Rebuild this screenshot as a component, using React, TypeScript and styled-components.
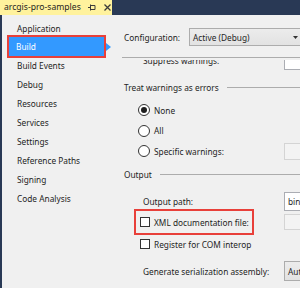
import React from 'react';
import styled, { createGlobalStyle } from 'styled-components';

const Global = createGlobalStyle`
  html, body { margin: 0; padding: 0; }
  body { width: 300px; height: 288px; overflow: hidden; background: #f0f0f0; }
  * { box-sizing: border-box; }
`;

const Window = styled.div`
  width: 300px;
  height: 288px;
  display: flex;
  flex-direction: column;
  background: #f0f0f0;
  font-family: "Noto Sans", sans-serif;
  font-size: 8.3px;
  color: #1e1e1e;
  overflow: hidden;
`;

const TabBar = styled.div`
  display: flex;
  height: 15px;
  flex: none;
  background: #293955;
`;

const Tab = styled.div`
  width: 112px;
  background: #fff29d;
  display: flex;
  align-items: center;
  padding: 0 0 1px 4px;
  font-size: 8.6px;
  color: #1e1e1e;
`;

const TabTitle = styled.span`
  width: 84px;
  white-space: nowrap;
`;

const TabIcon = styled.svg<{ $gap?: number }>`
  display: block;
  flex: none;
  margin-right: ${(p) => p.$gap ?? 0}px;
`;

const Body = styled.div`
  flex: 1;
  display: flex;
  min-height: 0;
`;

const Nav = styled.nav`
  width: 112px;
  flex: none;
  border-left: 2px solid #293955;
  padding-top: 3.6px;
  display: flex;
  flex-direction: column;
`;

const NavItem = styled.div<{ $selected?: boolean }>`
  position: relative;
  height: 18.9px;
  display: flex;
  align-items: center;
  white-space: nowrap;
  padding-left: ${(p) => (p.$selected ? 7 : 15)}px;
  margin-left: ${(p) => (p.$selected ? 7 : 0)}px;
  width: ${(p) => (p.$selected ? '95px' : 'auto')};
  background: ${(p) => (p.$selected ? '#3399ff' : 'transparent')};
  color: ${(p) => (p.$selected ? '#ffffff' : '#1e1e1e')};
  outline: ${(p) => (p.$selected ? '2px solid #e8403a' : 'none')};
  &::after {
    content: '';
    display: ${(p) => (p.$selected ? 'block' : 'none')};
    position: absolute;
    right: -7px;
    top: 50%;
    margin-top: -4px;
    border-left: 5px solid #3399ff;
    border-top: 4px solid transparent;
    border-bottom: 4px solid transparent;
  }
`;

const Content = styled.div`
  flex: 1;
  display: flex;
  flex-direction: column;
  min-width: 0;
`;

const ConfigRow = styled.div`
  display: flex;
  align-items: center;
  margin-top: 13px;
  padding-left: 12px;
  height: 18px;
  flex: none;
`;

const ConfigLabel = styled.span`
  width: 65px;
  flex: none;
`;

const Dropdown = styled.div<{ $width?: number }>`
  width: ${(p) => p.$width ?? 120}px;
  flex: none;
  height: 100%;
  display: flex;
  align-items: center;
  justify-content: space-between;
  padding: 0 2px 0 3px;
  background: linear-gradient(#ececec, #e2e2e2);
  border: 1px solid #acacac;
  white-space: nowrap;
  overflow: hidden;
`;

const Separator = styled.div`
  height: 1px;
  flex: none;
  background: #acacac;
  margin: 11px 0 0 10px;
`;

const Viewport = styled.div`
  flex: 1;
  overflow: hidden;
  margin-top: 2px;
  display: flex;
  flex-direction: column;
`;

const Row = styled.div<{ $h?: number; $mt?: number }>`
  display: grid;
  grid-template-columns: 172px 1fr;
  align-items: center;
  flex: none;
  height: ${(p) => p.$h ?? 20}px;
  margin-top: ${(p) => p.$mt ?? 0}px;
`;

const RowLabel = styled.div<{ $pl?: number }>`
  display: flex;
  align-items: center;
  gap: 4px;
  padding-left: ${(p) => p.$pl ?? 31}px;
  white-space: nowrap;
`;

const TextBox = styled.div<{ $h?: number; $disabled?: boolean }>`
  width: 40px;
  height: ${(p) => p.$h ?? 18}px;
  display: flex;
  align-items: center;
  padding-left: 3px;
  background: ${(p) => (p.$disabled ? '#f3f3f3' : '#ffffff')};
  border: 1px solid ${(p) => (p.$disabled ? '#d4d4d4' : '#abadb3')};
  white-space: nowrap;
  overflow: hidden;
`;

const GroupHeader = styled.div<{ $mt?: number }>`
  display: flex;
  align-items: center;
  gap: 8px;
  height: 18px;
  flex: none;
  margin-top: ${(p) => p.$mt ?? 0}px;
  padding-left: 12px;
  white-space: nowrap;
  &::after {
    content: '';
    flex: 1;
    height: 1px;
    background: #acacac;
  }
`;

const Radio = styled.span<{ $checked?: boolean }>`
  width: 12px;
  height: 12px;
  flex: none;
  border-radius: 50%;
  border: 1px solid #333333;
  background: #ffffff;
  display: flex;
  align-items: center;
  justify-content: center;
  &::after {
    content: '';
    display: ${(p) => (p.$checked ? 'block' : 'none')};
    width: 6px;
    height: 6px;
    border-radius: 50%;
    background: #1e1e1e;
  }
`;

const Checkbox = styled.span`
  width: 10px;
  height: 10px;
  flex: none;
  border: 1px solid #333333;
  background: #ffffff;
`;

const Highlight = styled.div`
  display: inline-flex;
  align-items: center;
  gap: 4px;
  height: 22px;
  padding: 0 3px 0 4px;
  outline: 2px solid #e8403a;
  justify-self: start;
`;

const ArrowGlyph = styled.svg`
  display: block;
  flex: none;
`;

const navItems = [
  'Application',
  'Build',
  'Build Events',
  'Debug',
  'Resources',
  'Services',
  'Settings',
  'Reference Paths',
  'Signing',
  'Code Analysis',
];

const Arrow = () => (
  <ArrowGlyph width="5" height="3" viewBox="0 0 5 3">
    <path d="M0 0h5L2.5 3z" fill="#333333" />
  </ArrowGlyph>
);

export default function App() {
  return (
    <>
      <Global />
      <Window>
        <TabBar>
          <Tab>
            <TabTitle>arcgis-pro-samples</TabTitle>
            <TabIcon $gap={8} width="8" height="7" viewBox="0 0 8 7">
              <path d="M0 3.5h2.5M2.5 0.5v6M2.5 1.5h4.5v4h-4.5" fill="none" stroke="#3a3a3a" strokeWidth="1" />
            </TabIcon>
            <TabIcon width="7" height="7" viewBox="0 0 7 7">
              <path d="M0.5 0.5l6 6M6.5 0.5l-6 6" fill="none" stroke="#3a3a3a" strokeWidth="1.3" />
            </TabIcon>
          </Tab>
        </TabBar>
        <Body>
          <Nav>
            {navItems.map((n) => (
              <NavItem key={n} $selected={n === 'Build'}>
                {n}
              </NavItem>
            ))}
          </Nav>
          <Content>
            <ConfigRow>
              <ConfigLabel>Configuration:</ConfigLabel>
              <Dropdown $width={112}>
                <span>Active (Debug)</span>
                <Arrow />
              </Dropdown>
            </ConfigRow>
            <Separator />
            <Viewport>
              <Row $h={19} $mt={-9}>
                <RowLabel>Suppress warnings:</RowLabel>
                <TextBox $h={19} />
              </Row>
              <GroupHeader $mt={8}>Treat warnings as errors</GroupHeader>
              <Row $h={20.5} $mt={4}>
                <RowLabel $pl={26}>
                  <Radio $checked />
                  None
                </RowLabel>
              </Row>
              <Row $h={20.5}>
                <RowLabel $pl={26}>
                  <Radio />
                  All
                </RowLabel>
              </Row>
              <Row $h={20.5}>
                <RowLabel $pl={26}>
                  <Radio />
                  Specific warnings:
                </RowLabel>
                <TextBox $h={17} $disabled />
              </Row>
              <GroupHeader $mt={3.5}>Output</GroupHeader>
              <Row $h={20} $mt={8}>
                <RowLabel>Output path:</RowLabel>
                <TextBox $h={19}>bin\</TextBox>
              </Row>
              <Row $h={22} $mt={0}>
                <RowLabel $pl={24}>
                  <Highlight>
                    <Checkbox />
                    XML documentation file:
                  </Highlight>
                </RowLabel>
                <TextBox $h={16} $disabled />
              </Row>
              <Row $h={20} $mt={1}>
                <RowLabel $pl={28}>
                  <Checkbox />
                  Register for COM interop
                </RowLabel>
              </Row>
              <Row $h={20} $mt={7}>
                <RowLabel>Generate serialization assembly:</RowLabel>
                <Dropdown $width={40}>
                  <span>Auto</span>
                  <Arrow />
                </Dropdown>
              </Row>
            </Viewport>
          </Content>
        </Body>
      </Window>
    </>
  );
}
